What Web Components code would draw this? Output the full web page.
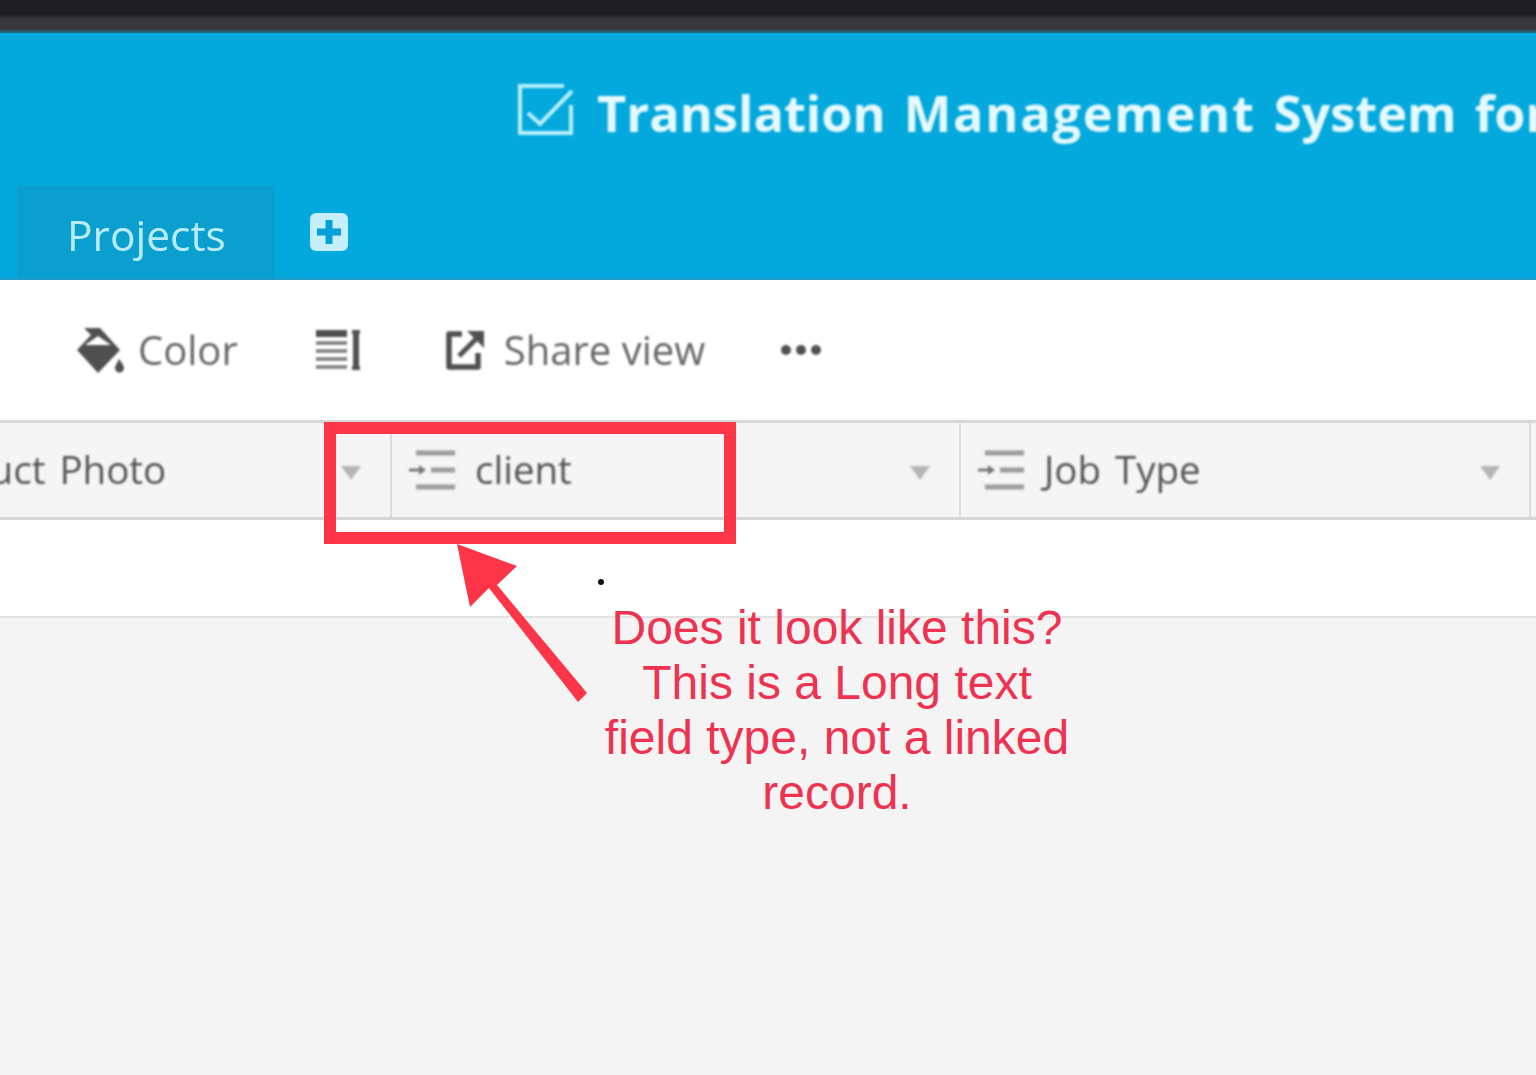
<!DOCTYPE html>
<html>
<head>
<meta charset="utf-8">
<title>Translation Management System</title>
<style>
  html, body { margin: 0; height: 100%; background: #f4f4f5; }
  body { position: relative; width: 1536px; height: 1075px; overflow: hidden; font-family: "Open Sans", sans-serif; }
</style>
</head>
<body>
<top-strip></top-strip>
<base-header title="Translation Management System for">
  <table-tab>Projects</table-tab>
</base-header>
<view-toolbar></view-toolbar>
<grid-head></grid-head>
<grid-row></grid-row>
<note-overlay>Does it look like this?<br>This is a Long text<br>field type, not a linked<br>record.</note-overlay>

<script>
class TopStrip extends HTMLElement {
  constructor() {
    super();
    this.attachShadow({ mode: "open" });
  }
  connectedCallback() {
    this.shadowRoot.innerHTML = `
      <style>
        :host {
          display: block;
          height: 33px;
          background: linear-gradient(#1e1d20 0, #1e1d20 14px, #38363b 19px, #38363b 29px, #1f6f8c 33px);
        }
      </style>`;
  }
}

class BaseHeader extends HTMLElement {
  constructor() {
    super();
    this.attachShadow({ mode: "open" });
  }
  connectedCallback() {
    const title = (this.getAttribute("title") || "").replace("Management", "<b>Management</b>");
    this.shadowRoot.innerHTML = `
      <style>
        :host {
          display: block;
          height: 247px;
          background: #03a8dc;
          color: #fff;
          box-sizing: border-box;
          border-bottom: 2px solid #1b9cc9;
          overflow: hidden;
        }
        .title {
          height: 152px;
          display: flex;
          align-items: flex-start;
          padding: 46px 0 0 517px;
          box-sizing: border-box;
          gap: 22px;
          white-space: nowrap;
          filter: blur(0.8px);
        }
        .title svg { flex: none; margin-top: 4px; }
        .title span {
          font: 700 50.5px/68px "Open Sans", sans-serif;
          color: #e6f9ff;
          word-spacing: 5px;
        }
        .title b { font-weight: 700; letter-spacing: 1.7px; }
        .tabs {
          height: 93px;
          display: flex;
          align-items: flex-start;
          padding-left: 17px;
        }
        .add {
          margin: 27px 0 0 34px;
          filter: blur(0.7px);
        }
      </style>
      <div class="title">
        <svg width="58" height="56" viewBox="0 0 58 56" fill="none" stroke="#b8f0ff" stroke-width="4">
          <path d="M54 22V50H3V3H47"/>
          <path d="M11 30L23 41L55 8"/>
        </svg>
        <span>${title}</span>
      </div>
      <div class="tabs">
        <slot></slot>
        <svg class="add" width="40" height="40" viewBox="0 0 40 40">
          <rect x="1" y="1" width="38" height="38" rx="6" fill="#c5effc"/>
          <path d="M20 8V32M8 20H32" stroke="#02a0d6" stroke-width="7"/>
        </svg>
      </div>`;
  }
}

class TableTab extends HTMLElement {
  constructor() {
    super();
    this.attachShadow({ mode: "open" });
  }
  connectedCallback() {
    this.shadowRoot.innerHTML = `
      <style>
        :host {
          display: block;
          width: 258px;
          height: 93px;
          box-sizing: border-box;
          padding: 20px 0 0 50px;
          background: #0b9fcf;
          color: #b9ecfb;
          font: 400 42.5px/60px "Open Sans", sans-serif;
        }
        div { filter: blur(0.7px); }
      </style>
      <div><slot></slot></div>`;
  }
}

class ViewToolbar extends HTMLElement {
  constructor() {
    super();
    this.attachShadow({ mode: "open" });
  }
  connectedCallback() {
    this.shadowRoot.innerHTML = `
      <style>
        :host {
          display: flex;
          align-items: center;
          height: 140px;
          box-sizing: border-box;
          padding: 0 0 0 76px;
          background: #fff;
          color: #666;
          font: 400 40px/50px "Open Sans", sans-serif;
          white-space: nowrap;
        }
        .wrap { display: flex; align-items: center; filter: blur(0.9px); }
        .item { display: flex; align-items: center; gap: 13px; }
        svg { flex: none; }
        .sort { margin-left: 78px; }
        .share { margin-left: 82px; gap: 19px; }
        .more { margin-left: 76px; }
      </style>
      <div class="wrap">
        <div class="item">
          <svg width="49" height="47" viewBox="0 0 49 47">
            <path d="M1 23L15 8L8 1H24L44 23L22 46Z" fill="#505050"/>
            <path d="M22 9L35 18H9Z" fill="#fff"/>
            <path d="M43 32C46 36 48 39 48 41A4.5 4.5 0 0 1 39 41C39 39 41 36 43 32Z" fill="#505050"/>
          </svg>
          <span>Color</span>
        </div>
        <svg class="sort" width="47" height="42" viewBox="0 0 47 42">
          <rect x="0" y="1" width="31" height="7" fill="#505050"/>
          <path d="M0 14H31M0 22H31M0 30H31M0 38H31" stroke="#7a7a7a" stroke-width="3.5"/>
          <path d="M40 4V38" stroke="#505050" stroke-width="6"/>
          <path d="M36 3H44M36 39H44" stroke="#505050" stroke-width="4"/>
        </svg>
        <div class="item share">
          <svg width="40" height="42" viewBox="0 0 40 42" fill="none" stroke="#505050">
            <path d="M17 5H4V38H33V24" stroke-width="5.5" stroke-linejoin="round"/>
            <path d="M14 27L33 8" stroke-width="5"/>
            <path d="M22 2H39V19Z" fill="#505050" stroke="none"/>
          </svg>
          <span>Share view</span>
        </div>
        <svg class="more" width="40" height="12" viewBox="0 0 40 12" fill="#505050">
          <circle cx="5" cy="6" r="5"/><circle cx="20" cy="6" r="5"/><circle cx="35" cy="6" r="5"/>
        </svg>
      </div>`;
  }
}

class FieldCell extends HTMLElement {
  constructor() {
    super();
    this.attachShadow({ mode: "open" });
  }
  connectedCallback() {
    const noIcon = this.hasAttribute("no-icon");
    this.shadowRoot.innerHTML = `
      <style>
        :host {
          display: flex;
          align-items: center;
          flex: none;
          box-sizing: border-box;
          height: 100%;
          border-right: 2px solid #dcdcdc;
          color: #555;
          font: 400 38.5px/50px "Open Sans", sans-serif;
          word-spacing: 4px;
          white-space: nowrap;
          overflow: hidden;
        }
        .inner { display: flex; align-items: center; flex: 1; min-width: 0; filter: blur(0.8px); }
        .name { flex: 1; margin-top: -2px; }
        .icon { flex: none; margin: 0 18px 0 17px; }
        .caret { flex: none; margin: 6px 29px 0 0; }
      </style>
      <div class="inner">
        ${noIcon ? "" : `<svg class="icon" width="48" height="40" viewBox="0 0 48 40">
          <path d="M7 3H46M7 37H46" stroke="#9c9c9c" stroke-width="5"/>
          <path d="M0 20H14" stroke="#777" stroke-width="3"/>
          <path d="M10 15L17 20L10 25Z" fill="#777"/>
          <path d="M22 20H46" stroke="#9c9c9c" stroke-width="5"/>
        </svg>`}
        <span class="name"><slot></slot></span>
        <svg class="caret" width="20" height="14" viewBox="0 0 20 14"><path d="M0 0H20L10 14Z" fill="#b5b5b5"/></svg>
      </div>`;
  }
}

class GridHead extends HTMLElement {
  constructor() {
    super();
    this.attachShadow({ mode: "open" });
  }
  connectedCallback() {
    this.shadowRoot.innerHTML = `
      <style>
        :host {
          display: flex;
          height: 100px;
          box-sizing: border-box;
          background: #f5f5f5;
          border-top: 3px solid #d8d8d8;
          border-bottom: 3px solid #d6d6d6;
          overflow: hidden;
        }
        .photo { width: 488px; margin-left: -96px; }
        .client { width: 569px; }
        .job { width: 570px; }
      </style>
      <field-cell class="photo" no-icon>Product Photo</field-cell>
      <field-cell class="client">client</field-cell>
      <field-cell class="job">Job Type</field-cell>`;
  }
}

class GridRow extends HTMLElement {
  constructor() {
    super();
    this.attachShadow({ mode: "open" });
  }
  connectedCallback() {
    this.shadowRoot.innerHTML = `
      <style>
        :host {
          display: block;
          height: 98px;
          box-sizing: border-box;
          background: #fff;
          border-bottom: 2px solid #e2e2e2;
        }
      </style>`;
  }
}

class NoteOverlay extends HTMLElement {
  constructor() {
    super();
    this.attachShadow({ mode: "open" });
  }
  connectedCallback() {
    this.shadowRoot.innerHTML = `
      <style>
        :host { display: block; position: absolute; inset: 0; pointer-events: none; }
        .box {
          position: absolute;
          left: 324px;
          top: 422px;
          width: 412px;
          height: 122px;
          box-sizing: border-box;
          border: 12px solid #fc3549;
        }
        svg { position: absolute; left: 0; top: 0; }
        .dot {
          position: absolute;
          left: 598px;
          top: 579px;
          width: 6px;
          height: 6px;
          border-radius: 50%;
          background: #111;
        }
        .text {
          position: absolute;
          left: 537px;
          top: 600px;
          width: 600px;
          text-align: center;
          color: #ee3350;
          font: 400 48px/55px "Liberation Sans", Arial, sans-serif;
          white-space: nowrap;
        }
      </style>
      <div class="box"></div>
      <svg width="1536" height="1075">
        <path d="M457 544L517 566L497 585L587 693L578 702L489 588L470 607Z" fill="#fc3549"/>
      </svg>
      <div class="dot"></div>
      <div class="text"><slot></slot></div>`;
  }
}

customElements.define("top-strip", TopStrip);
customElements.define("base-header", BaseHeader);
customElements.define("table-tab", TableTab);
customElements.define("view-toolbar", ViewToolbar);
customElements.define("field-cell", FieldCell);
customElements.define("grid-head", GridHead);
customElements.define("grid-row", GridRow);
customElements.define("note-overlay", NoteOverlay);
</script>
</body>
</html>
